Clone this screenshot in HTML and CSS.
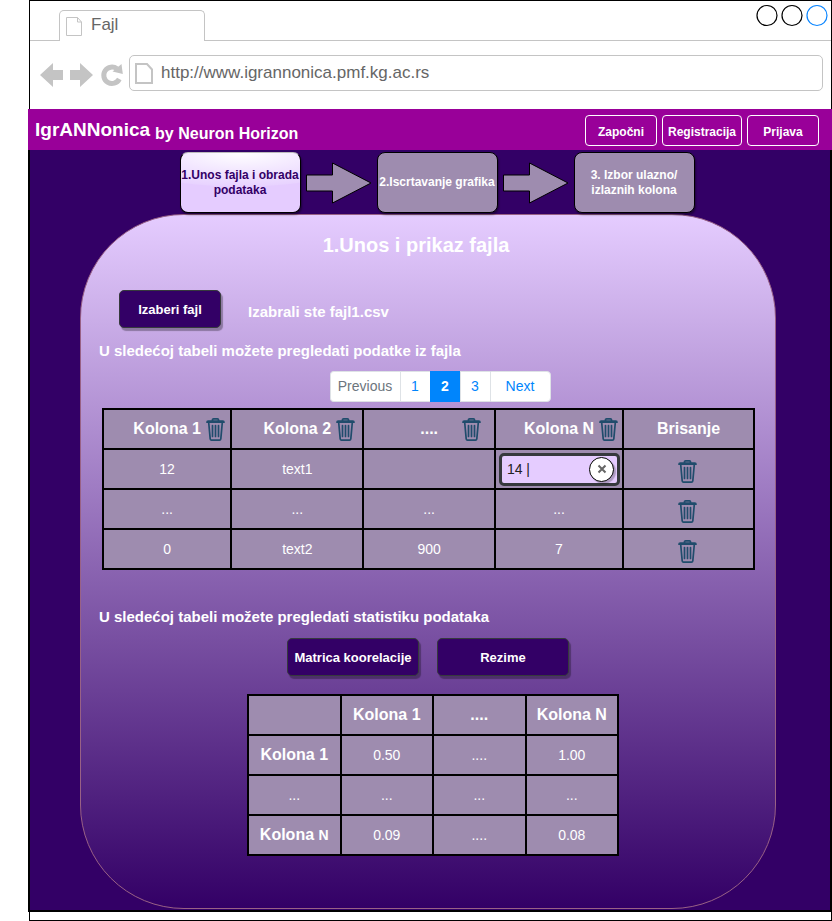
FILE: index.html
```html
<!DOCTYPE html>
<html lang="sr-Latn">
<head>
<meta charset="utf-8">
<title>IgrANNonica</title>
<link rel="stylesheet" href="styles.css">
</head>
<body>
<svg class="defs" aria-hidden="true">
  <symbol id="trash" viewBox="0 0 19 23">
    <g fill="none" stroke="#204c6c" stroke-width="1.7" stroke-linejoin="round" stroke-linecap="round">
      <path d="M1 4.2C1 3.5 1.5 3.2 2.2 3.2H16.8C17.5 3.2 18 3.500 18 4.200ZM6.500 3V1.800C6.500 1.200 6.900 0.900 7.500 0.900H11.500C12.100 0.900 12.500 1.200 12.500 1.800V3"/>
      <path d="M2.700 4.500L4.200 20.800C4.300 21.600 4.700 22.100 5.500 22.100H13.500C14.300 22.100 14.700 21.600 14.800 20.800L16.300 4.500"/>
      <path d="M6.500 7.500V18.500M9.500 7.500V18.500M12.500 7.500V18.500"/>
    </g>
  </symbol>
</svg>
<div class="window">
  <div class="tabs">
    <div class="tab">
      <svg class="tab-icon" viewBox="0 0 17 20"><path d="M.5 .5H11.500L15.500 5V18.500H.5ZM11.500 .5V5H15.500" fill="none" stroke="#c4c4c4"/></svg>
      <span>Fajl</span>
    </div>
    <svg class="controls" viewBox="0 0 74 23"><g fill="none" stroke-width="1.200"><circle cx="11" cy="11.500" r="10" stroke="#000"/><circle cx="36" cy="11.500" r="10" stroke="#000"/><circle cx="61" cy="11.500" r="10" stroke="#0a85ff"/></g></svg>
  </div>
  <div class="toolbar">
    <svg class="nav" viewBox="0 0 84 26" fill="#c4c4c4">
      <path d="M0 13L13 1V8H23V18H13V25Z"/>
      <path d="M53 13L40 1V8H30V18H40V25Z"/>
      <path d="M79.300 17A8.200 8.200 0 1 1 77 6.800" fill="none" stroke="#c4c4c4" stroke-width="5"/>
      <path d="M81.500 2L82.800 12L72.500 9.500Z"/>
    </svg>
    <label class="address">
      <svg class="page-icon" viewBox="0 0 18 21"><path d="M1 1H12L17 6.500V20H1Z" fill="none" stroke="#c4c4c4" stroke-width="2"/></svg>
      <input type="text" aria-label="Adresa" value="http://www.igrannonica.pmf.kg.ac.rs">
    </label>
  </div>
  <header class="header">
    <div class="brand"><span class="name">IgrANNonica</span><span class="by">by Neuron Horizon</span></div>
    <nav class="account">
      <button>Započni</button>
      <button class="wide">Registracija</button>
      <button>Prijava</button>
    </nav>
  </header>
  <main class="main">
    <nav class="steps">
      <button class="step active">1.Unos fajla i obrada podataka</button>
      <svg class="arrow" viewBox="0 0 66 42"><path d="M.5 13H26.500V1L65 21L26.500 41V29H.5Z" fill="#9e8caf" stroke="#000"/></svg>
      <button class="step">2.Iscrtavanje grafika</button>
      <svg class="arrow" viewBox="0 0 66 42"><path d="M.5 13H26.500V1L65 21L26.500 41V29H.5Z" fill="#9e8caf" stroke="#000"/></svg>
      <button class="step">3. Izbor ulazno/<br>izlaznih kolona</button>
    </nav>
    <section class="panel">
      <h1>1.Unos i prikaz fajla</h1>
      <div class="file">
        <button class="action choose">Izaberi fajl</button>
        <span>Izabrali ste fajl1.csv</span>
      </div>
      <p class="intro">U sledećoj tabeli možete pregledati podatke iz fajla</p>
      <nav class="pages">
        <a class="previous" href="#">Previous</a><a href="#">1</a><a class="current" href="#">2</a><a href="#">3</a><a class="next" href="#">Next</a>
      </nav>
      <table class="grid data">
        <colgroup><col class="c1"><col class="c2"><col class="c3"><col class="c4"><col class="c5"></colgroup>
        <thead>
          <tr>
            <th><div class="head"><span>Kolona 1</span><button class="trash" aria-label="Obriši"><svg><use href="#trash"/></svg></button></div></th>
            <th><div class="head"><span>Kolona 2</span><button class="trash" aria-label="Obriši"><svg><use href="#trash"/></svg></button></div></th>
            <th><div class="head more"><span>....</span><button class="trash" aria-label="Obriši"><svg><use href="#trash"/></svg></button></div></th>
            <th><div class="head"><span>Kolona N</span><button class="trash" aria-label="Obriši"><svg><use href="#trash"/></svg></button></div></th>
            <th>Brisanje</th>
          </tr>
        </thead>
        <tbody>
          <tr><td>12</td><td>text1</td><td></td><td class="editing"><div class="edit"><input type="text" aria-label="Kolona N" value="14 |"><button class="clear" aria-label="Poništi"><svg viewBox="0 0 10 10"><path d="M1.500 1.500L8.500 8.500M8.500 1.500L1.500 8.500" stroke="#666" stroke-width="2"/></svg></button></div></td><td class="remove"><button class="trash" aria-label="Obriši"><svg><use href="#trash"/></svg></button></td></tr>
          <tr><td>...</td><td>...</td><td>...</td><td>...</td><td class="remove"><button class="trash" aria-label="Obriši"><svg><use href="#trash"/></svg></button></td></tr>
          <tr><td>0</td><td>text2</td><td>900</td><td>7</td><td class="remove"><button class="trash" aria-label="Obriši"><svg><use href="#trash"/></svg></button></td></tr>
        </tbody>
      </table>
      <p class="intro second">U sledećoj tabeli možete pregledati statistiku podataka</p>
      <div class="views">
        <button class="action">Matrica koorelacije</button>
        <button class="action">Rezime</button>
      </div>
      <div class="matrix">
        <table class="grid stats">
          <thead><tr><th></th><th>Kolona 1</th><th>....</th><th>Kolona N</th></tr></thead>
          <tbody>
            <tr><th>Kolona 1</th><td>0.50</td><td>....</td><td>1.00</td></tr>
            <tr><td>...</td><td>...</td><td>...</td><td>...</td></tr>
            <tr><th>Kolona <small>N</small></th><td>0.09</td><td>....</td><td>0.08</td></tr>
          </tbody>
        </table>
      </div>
    </section>
  </main>
</div>
</body>
</html>
```
FILE: styles.css
```css
* { box-sizing: border-box; }
body { margin: 0; padding-left: 29px; background: #fff; font-family: "Liberation Sans", Arial, sans-serif; }
button, input { font: inherit; }
.defs { display: none; }
svg { display: block; }
.window { border: 1px solid #000; padding-bottom: 8px; }
.tabs { display: flex; justify-content: space-between; height: 40px; border-bottom: 1px solid #c4c4c4; padding-left: 29px; }
.tab { display: flex; gap: 8px; width: 146px; height: 31px; margin-top: 9px; padding: 5px 6px; border: 1px solid #c4c4c4; border-bottom: 0; border-radius: 5px 5px 0 0; background: #fff; color: #666; font-size: 17px; line-height: 18px; }
.tab-icon { width: 17px; height: 20px; margin-top: 1px; }
.controls { width: 74px; height: 23px; margin: 3px 1px 0 0; }
.toolbar { display: flex; align-items: center; gap: 5px; height: 68px; padding: 0 8px 4px 10px; }
.nav { flex: none; width: 84px; height: 26px; margin-top: 4px; }
.address { display: flex; flex: 1; align-items: center; gap: 8px; height: 36px; padding-left: 5px; border: 1px solid #c4c4c4; border-radius: 5px; }
.page-icon { width: 18px; height: 21px; }
.address input { flex: 1; border: 0; padding: 0; outline: 0; background: none; color: #666; font-size: 17px; }
.header { display: flex; justify-content: space-between; height: 41px; margin: 0 -1px 0 -2px; padding: 5px 13px 3px 7px; background: #909; color: #fff; }
.brand { display: flex; align-items: flex-end; gap: 5px; font-weight: bold; }
.name { font-size: 19px; line-height: 35px; }
.by { font-size: 16px; line-height: 26px; }
.account { display: flex; align-items: center; gap: 5px; }
.account button { width: 72px; height: 31px; padding: 2px 0 0; border: 1px solid #fff; border-radius: 4px; background: none; color: #fff; font-size: 12px; font-weight: bold; }
.account .wide { width: 80px; }
.main { margin: 0 -1px 0 -2px; border: 2px solid #000; border-top: 0; padding: 1px 54px 1px 50px; background: #306; }
.steps { display: flex; justify-content: center; align-items: center; gap: 5px; height: 63px; padding-left: 18px; }
.step { width: 121px; height: 61px; padding: 0; border: 1px solid #000; border-radius: 8px; background: #9e8caf; box-shadow: 1px 2px 2px rgba(0, 0, 0, .4); color: #fff; font-size: 12px; font-weight: bold; line-height: 15px; }
.step.active { border-color: #bbb #000 #000; background: radial-gradient(ellipse 130px 34px at 50% 0, #fff, #e8d3ff 97%, #e5ccff); color: #306; }
.arrow { width: 66px; height: 42px; flex: none; }
.panel { padding: 18px 18px 52px; border: 1px solid #996185; border-radius: 104px; background: linear-gradient(#e5ccff, #306); color: #fff; }
h1 { margin: 0; padding-right: 24px; font-size: 20px; line-height: 24px; text-align: center; }
.file { display: flex; align-items: center; gap: 27px; margin: 33px 0 0 20px; font-size: 15px; font-weight: bold; }
.file span { padding-top: 4px; }
.action { width: 132px; height: 38px; padding: 0; border: 1px solid #36393d; border-radius: 5px; background: #306; box-shadow: 2px 3px 1px rgba(0, 0, 0, .3); color: #fff; font-size: 13px; font-weight: bold; }
.choose { width: 102px; }
.intro { margin: 14px 0 0; font-size: 15px; font-weight: bold; line-height: 18px; }
.second { margin-top: 38px; }
.pages { display: flex; justify-content: center; margin-top: 11px; padding-left: 24px; }
.pages a { width: 30px; height: 31px; border-top: 1px solid #dee2e6; border-bottom: 1px solid #dee2e6; border-left: 1px solid #dee2e6; background: #fff; color: #0085fc; font-size: 14px; line-height: 29px; text-align: center; text-decoration: none; }
.pages .previous { width: 70px; border-radius: 4px 0 0 4px; color: #6c757d; }
.pages .next { width: 61px; border-right: 1px solid #dee2e6; border-radius: 0 4px 4px 0; }
.pages .current { border-color: #0085fc; background: #0085fc; color: #fff; font-weight: bold; }
.grid { border-collapse: collapse; table-layout: fixed; background: #9e8caf; font-size: 14px; text-align: center; }
.grid tr { height: 40px; }
.grid th, .grid td { padding: 0; border: 2px solid #000; }
.grid th { font-size: 16px; }
.grid small { font-size: 14px; }
.data { width: calc(100% - 5px); margin: 6px 2px 0 3px; }
.c1 { width: 19.7%; }
.c2 { width: 20.3%; }
.c3 { width: 20.2%; }
.c4 { width: 19.7%; }
.c5 { width: 20.1%; }
.head { display: grid; grid-template-columns: 1fr auto 1fr; align-items: center; gap: 5px; }
.head span { grid-column: 2; }
.head.more .trash { justify-self: end; margin-right: 13px; }
.trash { display: block; width: 19px; height: 23px; padding: 0; border: 0; background: none; }
.trash svg { width: 19px; height: 23px; }
.grid .remove { padding: 0 3px 5px 0; vertical-align: bottom; }
.remove .trash { margin: 0 auto; }
.grid .editing { padding: 0 2px 0 3px; }
.edit { display: flex; align-items: center; height: 33px; padding: 0 3px 0 5px; border: 3px solid #36393d; border-radius: 5px; background: #e5ccff; }
.edit input { flex: 1; min-width: 0; padding: 0; border: 0; outline: 0; background: none; color: #222; }
.clear { display: grid; place-items: center; width: 25px; height: 25px; padding: 0; border: 1px solid #000; border-radius: 50%; background: #fff; box-shadow: 2px 2px 1px rgba(0, 0, 0, .25); }
.clear svg { width: 10px; height: 10px; }
.views { display: flex; justify-content: center; gap: 18px; margin-top: 12px; }
.matrix { display: flex; justify-content: center; margin-top: 18px; padding-left: 10px; }
.stats { width: 372px; }
```
